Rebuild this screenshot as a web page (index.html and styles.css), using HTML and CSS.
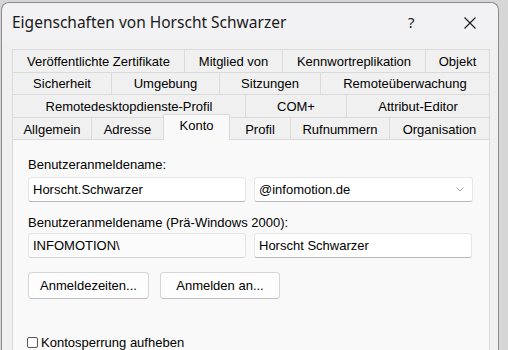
FILE: index.html
```html
<!DOCTYPE html>
<html lang="de">
<head>
  <meta charset="UTF-8" />
  <title>Eigenschaften von Horscht Schwarzer</title>
  <link rel="stylesheet" href="styles.css">
</head>
<body>
  <div class="window">
    <div class="titlebar">
      <span class="title">Eigenschaften von Horscht Schwarzer</span>
      <span class="help">?</span>
      <span class="close">
        <svg width="12" height="12" viewBox="0 0 12 12">
          <path d="M0.5 0.5 L11.5 11.5 M11.5 0.5 L0.5 11.5" stroke="#1a1a1a" stroke-width="1.1" fill="none"/>
        </svg>
      </span>
    </div>

    <div class="content">
      <div class="tabs">
        <div class="tab-row row1">
          <div class="tab">Veröffentlichte Zertifikate</div>
          <div class="tab">Mitglied von</div>
          <div class="tab">Kennwortreplikation</div>
          <div class="tab">Objekt</div>
        </div>
        <div class="tab-row row2">
          <div class="tab">Sicherheit</div>
          <div class="tab">Umgebung</div>
          <div class="tab">Sitzungen</div>
          <div class="tab">Remoteüberwachung</div>
        </div>
        <div class="tab-row row3">
          <div class="tab">Remotedesktopdienste-Profil</div>
          <div class="tab">COM+</div>
          <div class="tab">Attribut-Editor</div>
        </div>
        <div class="tab-row row4">
          <div class="tab">Allgemein</div>
          <div class="tab">Adresse</div>
          <div class="tab active">Konto</div>
          <div class="tab">Profil</div>
          <div class="tab">Rufnummern</div>
          <div class="tab">Organisation</div>
        </div>
      </div>

      <div class="panel">
        <div class="label">Benutzeranmeldename:</div>
        <div class="field-row">
          <div class="field">Horscht.Schwarzer</div>
          <div class="field combo">
            <span>@infomotion.de</span>
            <svg width="8" height="5" viewBox="0 0 8 5">
              <path d="M0.5 0.5 L4 4 L7.5 0.5" stroke="#a8a8a8" stroke-width="1" fill="none"/>
            </svg>
          </div>
        </div>

        <div class="label second">Benutzeranmeldename (Prä-Windows 2000):</div>
        <div class="field-row">
          <div class="field readonly">INFOMOTION\</div>
          <div class="field">Horscht Schwarzer</div>
        </div>

        <div class="button-row">
          <div class="btn btn-times">Anmeldezeiten...</div>
          <div class="btn btn-logon">Anmelden an...</div>
        </div>

        <div class="check-row">
          <span class="checkbox"></span>
          <span>Kontosperrung aufheben</span>
        </div>
      </div>
    </div>
  </div>
</body>
</html>
```

FILE: styles.css
```css
body {
  margin: 0;
  padding: 0;
  background: #d6d6d6;
  font-family: "Liberation Sans", Arial, sans-serif;
  font-size: 13px;
  color: #000;
  overflow: hidden;
}

.window {
  margin: 2px 0 0 1px;
  width: 496px;
  height: 347px;
  overflow: hidden;
  background: #f0f0f0;
  border: 1px solid #8c8c8c;
  border-bottom: none;
  border-radius: 8px 8px 0 0;
}

.titlebar {
  height: 38px;
  display: flex;
  align-items: center;
  padding-left: 10px;
  background: #f2f2f4;
  border-radius: 8px 8px 0 0;
}

.title {
  font-family: "Noto Sans", sans-serif;
  font-size: 15.5px;
  color: #1a1a1a;
  flex: 1;
}

.help {
  font-family: "Noto Sans", sans-serif;
  font-size: 15px;
  color: #1a1a1a;
  width: 56px;
}

.close {
  width: 34px;
  display: flex;
  padding-top: 2px;
}

.content {
  padding: 8px 9px 0 10px;
}

.tabs {
  width: 477px;
}

.tab-row {
  display: grid;
  border-left: 1px solid #dadada;
}

.row1 {
  grid-template-columns: 172px 98px 143px 64px;
  height: 23px;
}

.row2 {
  grid-template-columns: 99px 108px 101px 169px;
  height: 22px;
}

.row3 {
  grid-template-columns: 233px 101px 143px;
  height: 23px;
}

.row4 {
  grid-template-columns: 79px 72px 66px 61px 99px 100px;
  height: 22px;
}

.tab {
  border-top: 1px solid #dadada;
  border-right: 1px solid #dadada;
  display: flex;
  align-items: center;
  justify-content: center;
  white-space: nowrap;
  background: #f0f0f0;
}

.row4 .tab {
  padding-top: 1px;
}

.tab.active {
  position: relative;
  z-index: 1;
  background: #f9f9f9;
  margin-top: -3px;
  margin-bottom: -1px;
  padding-top: 0;
  padding-bottom: 4px;
  border-left: 1px solid #dadada;
  margin-left: -1px;
}

.panel {
  width: 461px;
  height: 200px;
  background: #f9f9f9;
  border: 1px solid #dadada;
  padding: 17px 0 0 15px;
}

.label {
  line-height: 15px;
  margin-bottom: 5px;
}

.label.second {
  margin-top: 13px;
  margin-bottom: 3px;
}

.field-row {
  display: flex;
  gap: 8px;
}

.field {
  box-sizing: border-box;
  width: 218px;
  height: 25px;
  background: #fff;
  border: 1px solid #e6e6e6;
  border-bottom-color: #b8b8b8;
  border-radius: 3px;
  padding-left: 4px;
  display: flex;
  align-items: center;
}

.field.combo {
  width: 219px;
  justify-content: space-between;
  padding-right: 8px;
}

.field.readonly {
  background: #fbfbfb;
  border-bottom-color: #d4d4d4;
}

.button-row {
  display: flex;
  gap: 11px;
  margin-top: 14px;
}

.btn {
  box-sizing: border-box;
  height: 27px;
  background: #fdfdfd;
  border: 1px solid #d6d6d6;
  border-bottom-color: #bdbdbd;
  border-radius: 4px;
  display: flex;
  align-items: center;
  justify-content: center;
}

.btn-times {
  width: 121px;
}

.btn-logon {
  width: 120px;
}

.check-row {
  display: flex;
  align-items: center;
  gap: 3px;
  margin-top: 36px;
  margin-left: -1px;
}

.checkbox {
  box-sizing: border-box;
  width: 11px;
  height: 11px;
  border: 1px solid #555;
  border-radius: 2px;
  background: #fff;
}
```
